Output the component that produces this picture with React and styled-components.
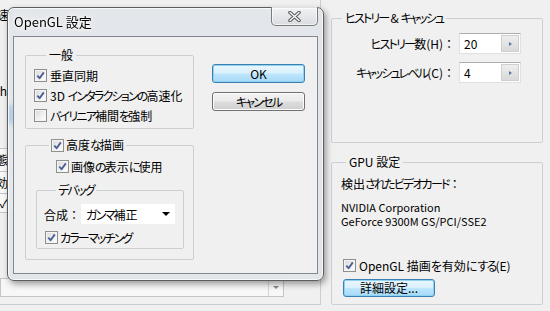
import React from 'react'
import styled, { createGlobalStyle } from 'styled-components'

const GlobalStyle = createGlobalStyle`
  html, body {
    margin: 0;
    padding: 0;
  }
  body {
    background: #f0f0f0;
    font-family: "Noto Sans CJK JP", "Noto Sans", sans-serif;
    font-size: 12px;
    color: #000;
    font-feature-settings: "palt";
  }
`

// Meiryo UI has narrow kana; squeeze kana runs to get the same widths.
const Kana = styled.span`
  letter-spacing: -1.8px;
`

const WideColon = styled.span`
  font-feature-settings: normal;
`

function Jp({ children }) {
  const parts = String(children).split(/([\u3040-\u30ff]+|：)/)
  return parts.map((p, i) => {
    if (!p) return null
    if (p === '：') return <WideColon key={i}>{p}</WideColon>
    if (/^[\u3040-\u30ff]+$/.test(p)) return <Kana key={i}>{p}</Kana>
    return <React.Fragment key={i}>{p}</React.Fragment>
  })
}

const Desktop = styled.div`
  position: relative;
  width: 550px;
  height: 311px;
  overflow: hidden;
  display: flex;
  align-items: flex-start;
  gap: 10px;
  background: #f0f0f0;
`

/* ---------- background: left preference pane ---------- */

const LeftPane = styled.div`
  box-sizing: border-box;
  width: 321px;
  height: 305px;
  border-right: 1px solid #c9cdd1;
  border-bottom: 1px solid #c9cdd1;
  display: flex;
  flex-direction: column;
  overflow: hidden;
`

const Fragment = styled.div`
  width: ${({ $w }) => $w}px;
  height: 16px;
  line-height: 16px;
  margin-top: ${({ $top }) => $top || 0}px;
  display: flex;
  justify-content: flex-end;
  white-space: nowrap;
`

const Selection = styled.div`
  margin: 6px 0 0 9px;
  width: 60px;
  height: 19px;
  background: #3b8fe3;
`

const Table = styled.div`
  margin-top: 24px;
  border-top: 1px solid #c5c5c5;
  width: 200px;
`

const TableRow = styled.div`
  height: ${({ $h }) => $h}px;
  border-bottom: 1px solid #c5c5c5;
  background: #f8f8f8;
  display: flex;
  align-items: center;
`

const Dropdown = styled.div`
  margin-top: auto;
  margin-bottom: 7px;
  box-sizing: border-box;
  width: 284px;
  height: 19px;
  border: 1px solid #c5c5c5;
  background: #f7f7f7;
  display: flex;
  justify-content: flex-end;
`

const DropArrow = styled.div`
  width: 14px;
  border-left: 1px solid #d5d5d5;
  display: flex;
  align-items: center;
  justify-content: center;
  &::after {
    content: "";
    border-left: 3px solid transparent;
    border-right: 3px solid transparent;
    border-top: 3px solid #8a8a8a;
  }
`

/* ---------- background: right column ---------- */

const RightColumn = styled.div`
  width: 212px;
  padding-top: 10px;
  display: flex;
  flex-direction: column;
  gap: 11px;
`

const GroupBox = styled.fieldset`
  box-sizing: border-box;
  margin: 0;
  margin-top: ${({ $mt }) => $mt || 0}px;
  min-width: 0;
  height: ${({ $h }) => ($h ? `${$h}px` : 'auto')};
  padding: ${({ $pad }) => $pad || '0'};
  border: 1px solid #cbd0d5;
  border-radius: 2px;
`

const Legend = styled.legend`
  margin-left: ${({ $ml }) => $ml || 10}px;
  padding: 0 ${({ $px }) => ($px === undefined ? 3 : $px)}px;
  height: 16px;
  line-height: 16px;
  display: flex;
  align-items: center;
  gap: 2px;
  white-space: nowrap;
`

const FieldGrid = styled.div`
  display: grid;
  grid-template-columns: 123px 62px;
  column-gap: 4px;
  row-gap: 8px;
  align-items: center;
`

const FieldLabel = styled.div`
  text-align: right;
  white-space: nowrap;
  line-height: 16px;
`

const NumberField = styled.div`
  box-sizing: border-box;
  height: 21px;
  background: #fff;
  border: 1px solid #dde1e6;
  border-top-color: #abadb3;
  display: flex;
  align-items: stretch;
`

const NumberValue = styled.span`
  flex: 1;
  padding-left: 4px;
  line-height: 19px;
`

const Scrub = styled.span`
  width: 16px;
  margin: 1px;
  border: 1px solid #cfcfcf;
  background: linear-gradient(#eeeeee, #d9d9d9);
  display: flex;
  align-items: center;
  justify-content: center;
  &::after {
    content: "";
    border-top: 2px solid transparent;
    border-bottom: 2px solid transparent;
    border-left: 3px solid #5a76a8;
  }
`

const InfoLine = styled.div`
  line-height: 16px;
`

const CardInfo = styled.div`
  margin-top: 8px;
  font-size: 11px;
  line-height: 14px;
  font-feature-settings: normal;
`

/* ---------- shared controls ---------- */

const CheckRow = styled.label`
  height: 20px;
  display: flex;
  align-items: center;
  gap: ${({ $gap }) => ($gap === undefined ? 3 : $gap)}px;
  margin-left: ${({ $ml }) => $ml || 0}px;
  margin-top: ${({ $mt }) => $mt || 0}px;
  white-space: nowrap;
`

const Box = styled.span`
  box-sizing: border-box;
  width: 13px;
  height: 13px;
  flex: none;
  border: 1px solid #8e8f8f;
  background: linear-gradient(135deg, #d8d8d8, #f6f6f6 70%, #ffffff);
  box-shadow: inset 0 0 0 1px #f4f4f4;
  display: flex;
  align-items: center;
  justify-content: center;
`

function Checkbox({ checked }) {
  return (
    <Box>
      {checked && (
        <svg width="9" height="9" viewBox="0 0 9 9">
          <path d="M1.3 4.6 L3.6 7.2 L7.8 1.4" fill="none" stroke="#4b5f96" strokeWidth="1.9" strokeLinejoin="round" />
        </svg>
      )}
    </Box>
  )
}

const Button = styled.button`
  box-sizing: border-box;
  width: ${({ $w }) => $w || 93}px;
  height: ${({ $h }) => $h || 19}px;
  margin: 0;
  margin-top: ${({ $mt }) => $mt || 0}px;
  margin-left: ${({ $ml }) => $ml || 0}px;
  padding: 0;
  font: inherit;
  line-height: 16px;
  color: #000;
  border-radius: 3px;
  border: 1px solid ${({ $primary }) => ($primary ? '#3c7fb1' : '#707070')};
  background: ${({ $primary }) =>
    $primary
      ? 'linear-gradient(#eaf6fd 0%, #d9f0fc 48%, #bee6fd 52%, #a7d9f5 100%)'
      : 'linear-gradient(#f2f2f2 0%, #ebebeb 48%, #dddddd 52%, #cfcfcf 100%)'};
  box-shadow: inset 0 0 0 1px ${({ $primary }) => ($primary ? '#8fd3f4' : '#fcfcfc')};
`

/* ---------- OpenGL dialog ---------- */

const Dialog = styled.div`
  position: absolute;
  left: 7px;
  top: 7px;
  box-sizing: border-box;
  width: 317px;
  height: 274px;
  padding: 0 5px 6px 5px;
  border: 1px solid #5e5e5e;
  border-radius: 7px;
  background: rgba(222, 226, 231, 0.72);
  backdrop-filter: blur(3px);
  box-shadow: 2px 3px 6px rgba(0, 0, 0, 0.38), inset 0 0 0 1px rgba(255, 255, 255, 0.7);
  display: flex;
  flex-direction: column;
`

const TitleBar = styled.div`
  height: 28px;
  display: flex;
  justify-content: space-between;
  align-items: flex-start;
`

const Title = styled.div`
  margin-top: 6px;
  padding-left: 1px;
  font-size: 13px;
  line-height: 16px;
  font-feature-settings: normal;
  text-shadow: 0 0 6px #fff, 0 0 3px #fff;
`

const CloseButton = styled.div`
  box-sizing: border-box;
  width: 47px;
  height: 19px;
  margin-top: -1px;
  border: 1px solid #7b7b7b;
  border-top: none;
  border-radius: 0 0 5px 5px;
  background: linear-gradient(rgba(255, 255, 255, 0.55), rgba(210, 212, 216, 0.55));
  box-shadow: inset 0 0 0 1px rgba(255, 255, 255, 0.6);
  display: flex;
  align-items: center;
  justify-content: center;
`

const Client = styled.div`
  flex: 1;
  border: 1px solid #83878f;
  background: #f0f0f0;
  padding: 10px 11px 0 11px;
  display: flex;
  gap: 18px;
`

const OptionsColumn = styled.div`
  width: 169px;
  display: flex;
  flex-direction: column;
  gap: 8px;
`

const ButtonColumn = styled.div`
  padding-top: 17px;
  display: flex;
  flex-direction: column;
`

const ComposeRow = styled.div`
  height: 20px;
  display: flex;
  align-items: center;
`

const ComposeLabel = styled.span`
  width: 37px;
  white-space: nowrap;
`

const Select = styled.div`
  box-sizing: border-box;
  width: 94px;
  height: 20px;
  background: #fff;
  padding: 0 5px;
  display: flex;
  align-items: center;
  justify-content: space-between;
  &::after {
    content: "";
    border-left: 4px solid transparent;
    border-right: 4px solid transparent;
    border-top: 4px solid #000;
  }
`

export default function App() {
  return (
    <>
      <GlobalStyle />
      <Desktop>
        <LeftPane>
          <Fragment $w={9} $top={7}>処理の迅速</Fragment>
          <Fragment $w={7} $top={60}>Switch</Fragment>
          <Selection />
          <Table>
            <TableRow $h={22}><Fragment $w={8}>状態</Fragment></TableRow>
            <TableRow $h={21}><Fragment $w={8}>有効</Fragment></TableRow>
            <TableRow $h={18}><Fragment $w={8}>✓</Fragment></TableRow>
          </Table>
          <Dropdown>
            <DropArrow />
          </Dropdown>
        </LeftPane>

        <RightColumn>
          <GroupBox $h={133} $pad="7px 0 0 0">
            <Legend $ml={10}><Jp>ヒストリー & キャッシュ</Jp></Legend>
            <FieldGrid>
              <FieldLabel><Jp>ヒストリー数(H)：</Jp></FieldLabel>
              <NumberField>
                <NumberValue>20</NumberValue>
                <Scrub />
              </NumberField>
              <FieldLabel><Jp>キャッシュレベル(C)：</Jp></FieldLabel>
              <NumberField>
                <NumberValue>4</NumberValue>
                <Scrub />
              </NumberField>
            </FieldGrid>
          </GroupBox>

          <GroupBox $h={151} $pad="6px 0 0 9px">
            <Legend $ml={5}>GPU 設定</Legend>
            <InfoLine><Jp>検出されたビデオカード：</Jp></InfoLine>
            <CardInfo>
              NVIDIA Corporation
              <br />
              GeForce 9300M GS/PCI/SSE2
            </CardInfo>
            <CheckRow $ml={2} $mt={27}>
              <Checkbox checked />
              <span>OpenGL 描画を有効に<Jp>する</Jp>(E)</span>
            </CheckRow>
            <Button $primary $w={92} $h={18} $mt={4} $ml={2}>詳細設定...</Button>
          </GroupBox>
        </RightColumn>

        <Dialog>
          <TitleBar>
            <Title>OpenGL 設定</Title>
            <CloseButton>
              <svg width="13" height="11" viewBox="0 0 13 11">
                <path d="M2 1.5 L11 9.5 M11 1.5 L2 9.5" stroke="#5a5a5a" strokeWidth="3.6" strokeLinecap="round" />
                <path d="M2 1.5 L11 9.5 M11 1.5 L2 9.5" stroke="#f4f4f4" strokeWidth="1.6" strokeLinecap="round" />
              </svg>
            </CloseButton>
          </TitleBar>
          <Client>
            <OptionsColumn>
              <GroupBox $pad="2px 0 3px 8px">
                <Legend $ml={12}>一般</Legend>
                <CheckRow><Checkbox checked /><span>垂直同期</span></CheckRow>
                <CheckRow><Checkbox checked /><span><Jp>3D インタラクションの高速化</Jp></span></CheckRow>
                <CheckRow><Checkbox /><span><Jp>バイリニア補間を強制</Jp></span></CheckRow>
              </GroupBox>

              <GroupBox $pad="3px 9px 10px 10px">
                <Legend $ml={13} $px={2}>
                  <Checkbox checked />
                  <span><Jp>高度な描画</Jp></span>
                </Legend>
                <CheckRow $ml={20} $gap={2}><Checkbox checked /><span><Jp>画像の表示に使用</Jp></span></CheckRow>
                <GroupBox $pad="6px 0 1px 7px" $mt={6}>
                  <Legend $ml={12} $px={2}><Jp>デバッグ</Jp></Legend>
                  <ComposeRow>
                    <ComposeLabel><Jp>合成：</Jp></ComposeLabel>
                    <Select><span><Jp>ガンマ補正</Jp></span></Select>
                  </ComposeRow>
                  <CheckRow $ml={1} $mt={3} $gap={2}><Checkbox checked /><span><Jp>カラーマッチング</Jp></span></CheckRow>
                </GroupBox>
              </GroupBox>
            </OptionsColumn>

            <ButtonColumn>
              <Button $primary>OK</Button>
              <Button $mt={9}><Jp>キャンセル</Jp></Button>
            </ButtonColumn>
          </Client>
        </Dialog>
      </Desktop>
    </>
  )
}
